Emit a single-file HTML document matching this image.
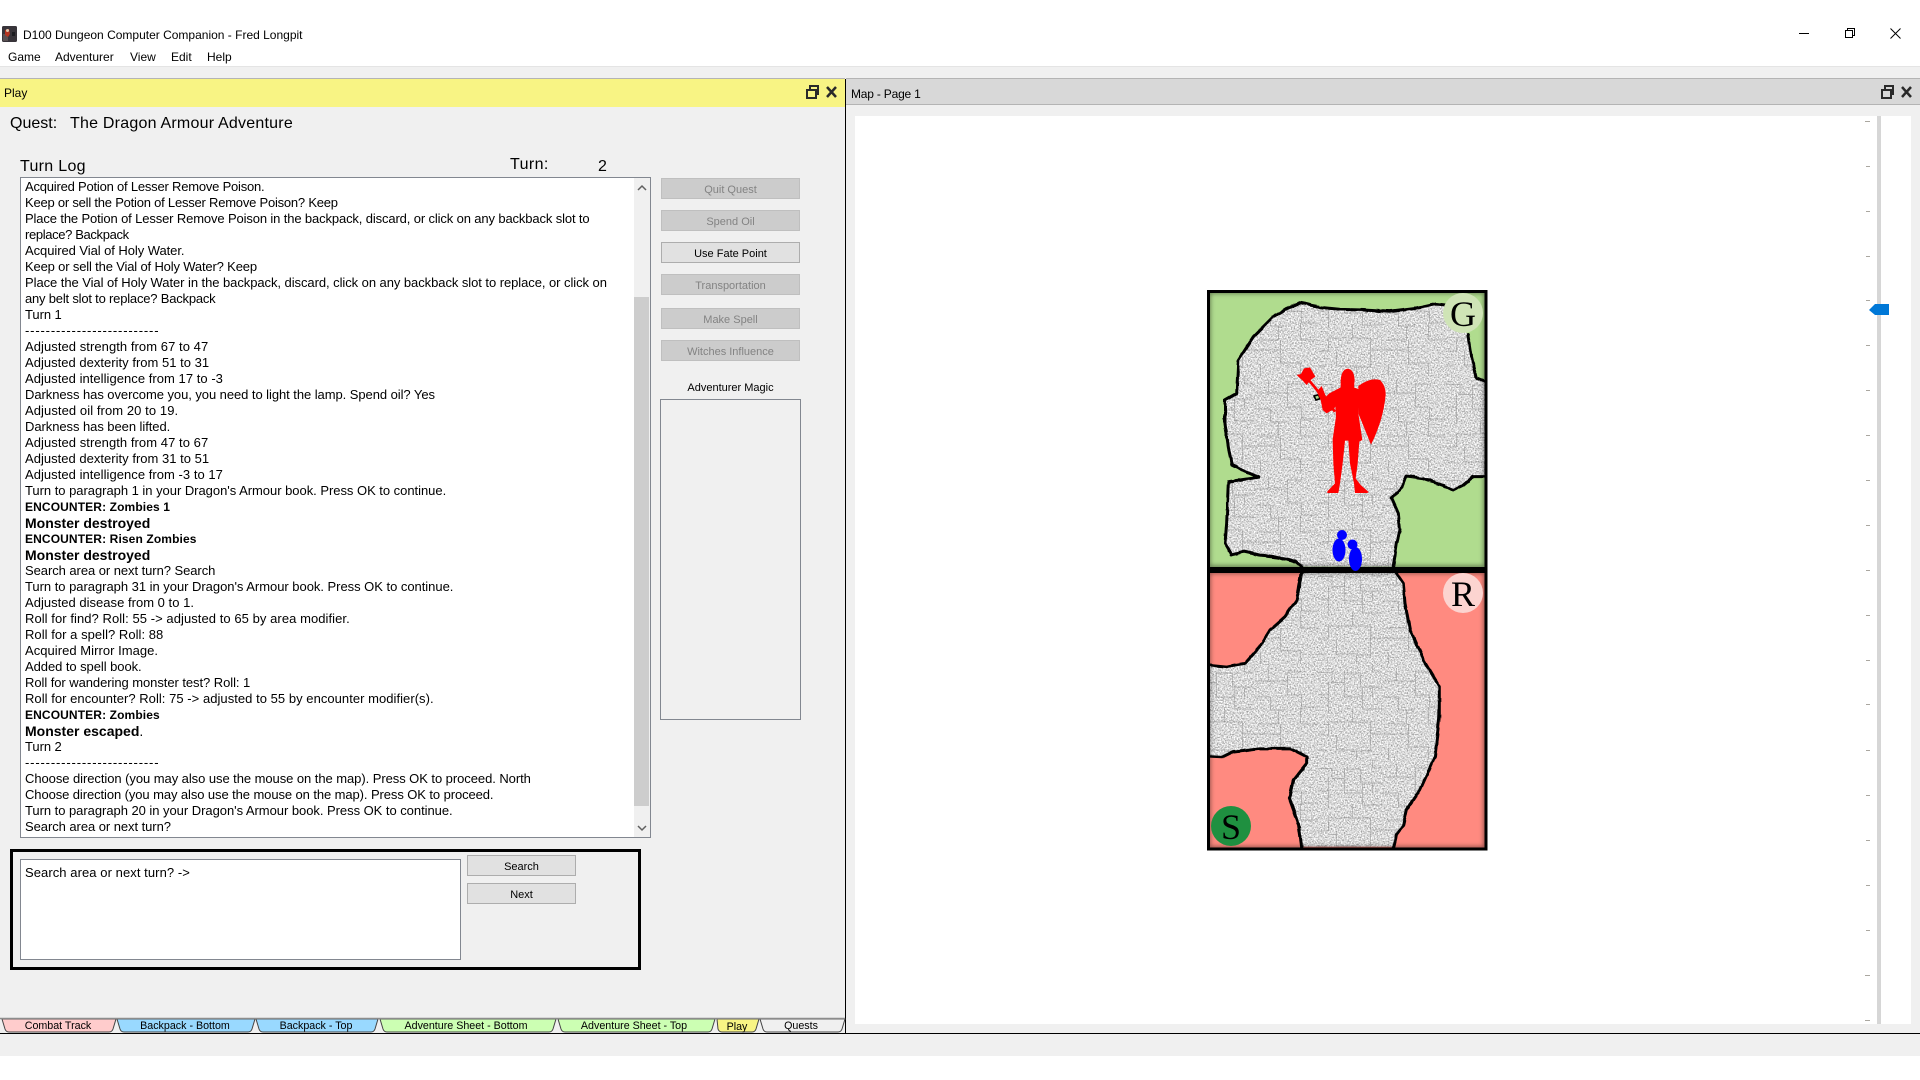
<!DOCTYPE html>
<html><head><meta charset="utf-8"><title>D100 Dungeon Computer Companion</title>
<style>
*{box-sizing:border-box}
html,body{margin:0;padding:0;background:#fff}
body{position:relative;width:1920px;height:1080px;overflow:hidden;font-family:"Liberation Sans",sans-serif;font-size:12px;color:#000}
.a{position:absolute;white-space:nowrap}
.btn{position:absolute;display:flex;align-items:center;justify-content:center;font-size:11px;height:21px;padding-top:2px;background:#e1e1e1;border:1px solid #adadad;color:#000}
.dis{background:#ccc;border-color:#bfbfbf;color:#838383}
#log{position:absolute;left:20px;top:177px;width:631px;height:661px;background:#fff;border:1px solid #828790;overflow:hidden}
#log div{position:absolute;left:4px;white-space:nowrap;height:16px;line-height:16px;font-size:13px;letter-spacing:-.06px}
#log div.e{font-size:12px;letter-spacing:.12px;font-weight:bold}
#log div.m{font-size:14px;letter-spacing:0}
#log div.d{letter-spacing:.84px}
#log b{font-weight:bold}
</style></head><body>
<div class="a" style="left:0;top:66px;width:1920px;height:990px;background:#f0f0f0"></div>
<div class="a" style="left:0;top:66px;width:1920px;height:1px;background:#e4e4e4"></div>
<svg class="a" style="left:2px;top:26px" width="15" height="16"><rect width="15" height="16" rx="1.500" fill="#38343a"/><rect x="1" y="8" width="5" height="7" fill="#5a5052"/><path d="M3 4l4-1 1 5-2 3-3-2z" fill="#b5331f"/><circle cx="5.500" cy="4.500" r="1.500" fill="#e0c8b0"/><rect x="10" y="6" width="3" height="4" fill="#1c1c20"/></svg>
<div class="a" style="left:23px;top:27px;font-size:12px;line-height:16px">D100 Dungeon Computer Companion - Fred Longpit</div>
<div class="a" style="left:8px;top:49px;font-size:12px;line-height:16px">Game</div>
<div class="a" style="left:55px;top:49px;font-size:12px;line-height:16px">Adventurer</div>
<div class="a" style="left:130px;top:49px;font-size:12px;line-height:16px">View</div>
<div class="a" style="left:171px;top:49px;font-size:12px;line-height:16px">Edit</div>
<div class="a" style="left:207px;top:49px;font-size:12px;line-height:16px">Help</div>
<svg class="a" style="left:1790px;top:20px" width="130" height="30" fill="none" stroke="#000" stroke-width="1"><path d="M9 13.500H19"/><path d="M55.500 17.500h7v-7h-7zM57.500 10.500v-2h7v7h-2"/><path d="M100.500 8.500l10 10M110.500 8.500l-10 10"/></svg>

<!-- Play header -->
<div class="a" style="left:0;top:78px;width:845px;height:1px;background:#b4b4b4"></div>
<div class="a" style="left:0;top:79px;width:845px;height:28px;background:#f8f484"></div>
<div class="a" style="left:4px;top:85px;font-size:12px;line-height:16px">Play</div>
<svg class="a" style="left:804px;top:84px" width="36" height="16" fill="none" stroke="#2a2a2a" stroke-width="2"><path d="M3 6h9v8H3zM6 5V2h8v8h-2"/><path d="M23 3l9 10M32 3l-9 10" stroke-width="2.500"/></svg>
<div class="a" style="left:845px;top:79px;width:1px;height:954px;background:#000"></div>

<div class="a" style="left:10px;top:114px;font-size:16px;line-height:19px">Quest:</div>
<div class="a" style="left:70px;top:114px;font-size:16px;line-height:19px;letter-spacing:.22px">The Dragon Armour Adventure</div>
<div class="a" style="left:20px;top:157px;font-size:16px;line-height:19px;height:20px;overflow:hidden;letter-spacing:.3px">Turn Log</div>
<div class="a" style="left:510px;top:155px;font-size:16px;line-height:19px;letter-spacing:.4px">Turn:</div>
<div class="a" style="left:598px;top:157px;font-size:16px;line-height:19px">2</div>

<div id="log">
<div style="top:1px;letter-spacing:-.21px">Acquired Potion of Lesser Remove Poison.</div>
<div style="top:17px;letter-spacing:-.22px">Keep or sell the Potion of Lesser Remove Poison? Keep</div>
<div style="top:33px;letter-spacing:-.13px">Place the Potion of Lesser Remove Poison in the backpack, discard, or click on any backback slot to</div>
<div style="top:49px;letter-spacing:-.36px">replace? Backpack</div>
<div style="top:65px">Acquired Vial of Holy Water.</div>
<div style="top:81px;letter-spacing:-.16px">Keep or sell the Vial of Holy Water? Keep</div>
<div style="top:97px">Place the Vial of Holy Water in the backpack, discard, click on any backback slot to replace, or click on</div>
<div style="top:113px;letter-spacing:-.2px">any belt slot to replace? Backpack</div>
<div style="top:129px">Turn 1</div>
<div class="d" style="top:145px">--------------------------</div>
<div style="top:161px;letter-spacing:.06px">Adjusted strength from 67 to 47</div>
<div style="top:177px;letter-spacing:.02px">Adjusted dexterity from 51 to 31</div>
<div style="top:193px;letter-spacing:.04px">Adjusted intelligence from 17 to -3</div>
<div style="top:209px">Darkness has overcome you, you need to light the lamp. Spend oil? Yes</div>
<div style="top:225px;letter-spacing:.08px">Adjusted oil from 20 to 19.</div>
<div style="top:241px">Darkness has been lifted.</div>
<div style="top:257px;letter-spacing:.06px">Adjusted strength from 47 to 67</div>
<div style="top:273px;letter-spacing:.02px">Adjusted dexterity from 31 to 51</div>
<div style="top:289px;letter-spacing:.04px">Adjusted intelligence from -3 to 17</div>
<div style="top:305px;letter-spacing:-.03px">Turn to paragraph 1 in your Dragon's Armour book. Press OK to continue.</div>
<div class="e" style="top:321px">ENCOUNTER: Zombies 1</div>
<div class="m" style="top:337px"><b>Monster destroyed</b></div>
<div class="e" style="top:353px">ENCOUNTER: Risen Zombies</div>
<div class="m" style="top:369px"><b>Monster destroyed</b></div>
<div style="top:385px">Search area or next turn? Search</div>
<div style="top:401px;letter-spacing:-.03px">Turn to paragraph 31 in your Dragon's Armour book. Press OK to continue.</div>
<div style="top:417px;letter-spacing:.02px">Adjusted disease from 0 to 1.</div>
<div style="top:433px;letter-spacing:.06px">Roll for find? Roll: 55 -&gt; adjusted to 65 by area modifier.</div>
<div style="top:449px;letter-spacing:.04px">Roll for a spell? Roll: 88</div>
<div style="top:465px;letter-spacing:.04px">Acquired Mirror Image.</div>
<div style="top:481px">Added to spell book.</div>
<div style="top:497px">Roll for wandering monster test? Roll: 1</div>
<div style="top:513px;letter-spacing:.04px">Roll for encounter? Roll: 75 -&gt; adjusted to 55 by encounter modifier(s).</div>
<div class="e" style="top:529px">ENCOUNTER: Zombies</div>
<div class="m" style="top:545px"><b>Monster escaped</b>.</div>
<div style="top:561px">Turn 2</div>
<div class="d" style="top:577px">--------------------------</div>
<div style="top:593px">Choose direction (you may also use the mouse on the map). Press OK to proceed. North</div>
<div style="top:609px;letter-spacing:-.09px">Choose direction (you may also use the mouse on the map). Press OK to proceed.</div>
<div style="top:625px;letter-spacing:-.04px">Turn to paragraph 20 in your Dragon's Armour book. Press OK to continue.</div>
<div style="top:641px">Search area or next turn?</div>
</div>
<div class="a" style="left:634px;top:178px;width:16px;height:659px;background:#f0f0f0"></div>
<div class="a" style="left:634px;top:297px;width:15px;height:509px;background:#cdcdcd"></div>
<svg class="a" style="left:634px;top:178px" width="16" height="660" fill="none" stroke="#606060" stroke-width="1.500"><path d="M4 12l4-4 4 4"/><path d="M4 648l4 4 4-4"/></svg>

<div class="btn dis" style="left:661px;top:178px;width:139px">Quit Quest</div>
<div class="btn dis" style="left:661px;top:210px;width:139px">Spend Oil</div>
<div class="btn" style="left:661px;top:242px;width:139px">Use Fate Point</div>
<div class="btn dis" style="left:661px;top:274px;width:139px">Transportation</div>
<div class="btn dis" style="left:661px;top:308px;width:139px">Make Spell</div>
<div class="btn dis" style="left:661px;top:340px;width:139px">Witches Influence</div>
<div class="a" style="left:660px;width:141px;top:381px;text-align:center;font-size:11px;line-height:14px">Adventurer Magic</div>
<div class="a" style="left:660px;top:399px;width:141px;height:321px;border:1px solid #828790"></div>

<div class="a" style="left:10px;top:849px;width:631px;height:121px;border:3px solid #000"></div>
<div class="a" style="left:20px;top:859px;width:441px;height:101px;background:#fff;border:1px solid #828790"></div>
<div class="a" style="left:25px;top:865px;font-size:13px;letter-spacing:.07px;line-height:16px">Search area or next turn? -&gt;</div>
<div class="btn" style="left:467px;top:855px;width:109px">Search</div>
<div class="btn" style="left:467px;top:883px;width:109px">Next</div>

<!-- Tabs -->
<svg class="a" style="left:0;top:1015px" width="850" height="22" font-family="Liberation Sans, sans-serif" font-size="10.700" text-anchor="middle">
<g stroke="#444" stroke-width="1">
<path d="M2 4h114l-3 10q-1 3-4 3H9q-3 0-4-3z" fill="#ffcccc"/>
<path d="M117 4h138l-3 10q-1 3-4 3H124q-3 0-4-3z" fill="#99d9ff"/>
<path d="M256 4h122l-3 10q-1 3-4 3H263q-3 0-4-3z" fill="#99d9ff"/>
<path d="M380 4h176l-3 10q-1 3-4 3H387q-3 0-4-3z" fill="#ccffb3"/>
<path d="M558 4h157l-3 10q-1 3-4 3H565q-3 0-4-3z" fill="#ccffb3"/>
<path d="M760 4h85l-3 10q-1 3-4 3H767q-3 0-4-3z" fill="#f0f0f0"/>
</g>
<path d="M717 4h42l-3 10q-1 3-4 3h-30q-3 0-4-3z" fill="#f8f484" stroke="#444"/>
<path d="M0 3.500H845" stroke="#8c8c8c" stroke-width="1.500"/>
<text x="58" y="14">Combat Track</text>
<text x="185" y="14">Backpack - Bottom</text>
<text x="316" y="14">Backpack - Top</text>
<text x="466" y="14">Adventure Sheet - Bottom</text>
<text x="634" y="14">Adventure Sheet - Top</text>
<text x="737" y="15">Play</text>
<text x="801" y="14">Quests</text>
</svg>
<div class="a" style="left:0;top:1033px;width:1920px;height:1px;background:#000"></div>

<!-- Map pane -->
<div class="a" style="left:846px;top:78px;width:1074px;height:1px;background:#b4b4b4"></div>
<div class="a" style="left:846px;top:79px;width:1074px;height:26px;background:#d8d8d8;border-bottom:1px solid #b4b4b4"></div>
<div class="a" style="left:851px;top:86px;font-size:12px;line-height:16px;letter-spacing:-.2px">Map - Page 1</div>
<svg class="a" style="left:1879px;top:84px" width="36" height="16" fill="none" stroke="#2a2a2a" stroke-width="2"><path d="M3 6h9v8H3zM6 5V2h8v8h-2"/><path d="M23 3l9 10M32 3l-9 10" stroke-width="2.500"/></svg>
<div class="a" style="left:855px;top:116px;width:1056px;height:908px;background:#fff"></div>
<div class="a" style="left:1877px;top:116px;width:4px;height:908px;background:#d6d6d6"></div>
<svg class="a" style="left:1860px;top:116px" width="16" height="908" stroke="#aaa7a0" stroke-width="1"><path d="M5 5.500h5M6 50.500h4M6 95.500h4M6 140.500h4M6 184.500h4M6 229.500h4M6 274.500h4M6 319.500h4M6 364.500h4M6 409.500h4M6 454.500h4M6 499.500h4M6 544.500h4M6 588.500h4M6 634.500h4M6 679.500h4M6 724.500h4M6 769.500h4M6 814.500h4M5 859.500h5M5 904.500h5"/></svg>
<svg class="a" style="left:1869px;top:304px" width="21" height="12"><path d="M0 6L6 0H20V11H6z" fill="#0078d7"/></svg>

<!-- Map -->
<svg class="a" style="left:1190px;top:280px" width="310" height="580" viewBox="0 0 310 580">
<defs>
<filter id="tx" x="0" y="0" width="100%" height="100%" color-interpolation-filters="sRGB">
<feTurbulence type="fractalNoise" baseFrequency="0.7" numOctaves="2" seed="7"/>
<feColorMatrix type="matrix" values="0.9 0 0 0 0.4 0.9 0 0 0 0.4 0.9 0 0 0 0.4 0 0 0 0 1"/>
</filter>
<filter id="wob" x="-5%" y="-5%" width="110%" height="110%">
<feTurbulence type="fractalNoise" baseFrequency="0.08" numOctaves="2" seed="3"/>
<feDisplacementMap in="SourceGraphic" scale="3" xChannelSelector="R" yChannelSelector="G"/>
</filter>
<filter id="bl" x="-5%" y="-5%" width="110%" height="110%"><feGaussianBlur stdDeviation="2.500"/></filter>
<pattern id="cr" width="128" height="96" patternUnits="userSpaceOnUse">
<path fill="none" stroke="#808080" stroke-width="1" stroke-opacity=".42" d="M0 8.500h14v10h12M26.500 18v-9h16M42.500 9v14h22M10.500 18v13H0M10.500 31v17M26.500 18v15h18v-10M44.500 33v12h20M54.500 23v10M54.500 0v8h9M78.500 4v13h19v-9h16M97.500 17v14h14v12h16M78.500 17h-14M64.500 33h16v13h16M88.500 46v14h-20M34.500 45v13h-24v13H0M34.500 58h18v12h18M18.500 71v15h20v10M52.500 70v17h-14M70.500 70h20v13h20M110.500 83v13M110.500 60h17M110.500 60v-17M90.500 70V60M8.500 86H0M70.500 84v12"/>
</pattern>
<clipPath id="up"><path transform="scale(.3333)" d="M330 68L350 72L390 82L450 88L520 90L600 95L680 85L740 72L765 75L835 165L845 230L860 295L885 305V590H850L820 615L790 630L760 615L700 595L650 588L635 620L605 655L625 700L630 750L620 790L610 860H335L320 848L270 832L210 825L160 815L125 825L105 790L110 730L115 605L205 592L165 575L125 555L115 500L105 430L105 360L140 340L145 240L190 170L250 110L290 85Z"/></clipPath>
<clipPath id="lo"><path transform="translate(0 280) scale(.3333)" d="M335 38L320 120L285 170L240 210L210 260L165 310L110 320L60 315V590L95 592L130 575L210 565L300 565L350 590V610L310 660L298 715L325 790L335 860H610L618 825L640 795L650 750L690 690L735 590L748 470V380L700 300L660 210L645 130L640 70L618 38Z"/></clipPath>
<clipPath id="r1"><rect x="18" y="11" width="278" height="277"/></clipPath>
<clipPath id="r2"><rect x="18" y="291" width="278" height="278"/></clipPath>
</defs>
<rect x="18" y="11" width="278" height="277" fill="#b0dc8e"/>
<rect x="18" y="291" width="278" height="278" fill="#ff8a80"/>
<g clip-path="url(#up)"><rect x="18" y="11" width="278" height="277" filter="url(#tx)"/><rect x="18" y="11" width="278" height="277" fill="url(#cr)"/></g>
<g clip-path="url(#lo)"><rect x="18" y="291" width="278" height="278" filter="url(#tx)"/><rect x="18" y="291" width="278" height="278" fill="url(#cr)"/></g>
<g fill="none" stroke="#000" stroke-width="9" stroke-linejoin="round" stroke-linecap="round" filter="url(#wob)">
<path transform="scale(.3333)" d="M885 305L860 295L845 230L835 165M765 75L740 72L680 85L600 95L520 90L450 88L390 82L350 72L330 68L290 85L250 110L190 170L145 240L140 340L105 360V430L115 500L125 555L165 575L205 592L115 605L110 730L105 790L125 825L160 815L210 825L270 832L320 848L335 860M610 860L620 790L630 750L625 700L605 655L635 620L650 588L700 595L760 615L790 630L820 615L850 590H885"/>
<path transform="translate(0 280) scale(.3333)" d="M335 38L320 120L285 170L240 210L210 260L165 310L110 320L60 315M60 590L95 592L130 575L210 565L300 565L350 590V610L310 660L298 715L325 790L335 860M610 860L618 825L640 795L650 750L690 690L735 590L748 470V380L700 300L660 210L645 130L640 70L618 38"/>
</g>
<g clip-path="url(#r1)"><rect x="18" y="11" width="278" height="277" fill="none" stroke="#000" stroke-opacity=".45" stroke-width="5" filter="url(#bl)"/></g>
<g clip-path="url(#r2)"><rect x="18" y="291" width="278" height="278" fill="none" stroke="#000" stroke-opacity=".45" stroke-width="5" filter="url(#bl)"/></g>
<path d="M18.500 11.500H296V569H18.500Z" fill="none" stroke="#000" stroke-width="3"/>
<rect x="18" y="287" width="279" height="6" fill="#000"/>
<circle cx="273" cy="33" r="20" fill="#cfe4b6"/>
<text x="273" y="46" font-family="Liberation Serif, serif" font-size="36" text-anchor="middle">G</text>
<circle cx="273" cy="313" r="20" fill="#fcd4d0"/>
<text x="273" y="326" font-family="Liberation Serif, serif" font-size="36" text-anchor="middle">R</text>
<circle cx="41" cy="546" r="20" fill="#1f9040"/>
<text x="41" y="559" font-family="Liberation Serif, serif" font-size="36" text-anchor="middle">S</text>
<g transform="translate(100 70) scale(.3333)">
<path d="M72 138l14-4 4 12-12 4z" fill="#b0dc8e" stroke="#000" stroke-width="5"/>
<path d="M52 85L135 185" stroke="#f00" stroke-width="8"/>
<path d="M20 75L33 72L42 55L60 52L76 80L62 90L50 105L38 92Z" fill="#f00"/>
<path d="M205 108Q240 82 270 90Q288 108 287 135Q280 210 243 284L222 232L205 190Z" fill="#f00"/>
<path d="M152 90Q155 58 173 56Q192 58 194 90L192 112L207 118L205 190L217 270L208 275L203 340L197 385L212 405L236 426L232 429H195L192 400L180 340L175 272H165L158 340L150 400L145 429H112V424L135 400L130 340L128 268L138 200L136 170L130 178L110 190L98 180L92 150L80 125L95 108L108 140L118 130L152 112Z" fill="#f00"/>
</g>
<g fill="#00f">
<ellipse cx="149" cy="270" rx="6.500" ry="11.500"/><circle cx="152" cy="255" r="5"/>
<ellipse cx="165.500" cy="279" rx="6.500" ry="12"/><circle cx="162.500" cy="264.500" r="5"/>
</g>
</svg>
</body></html>
